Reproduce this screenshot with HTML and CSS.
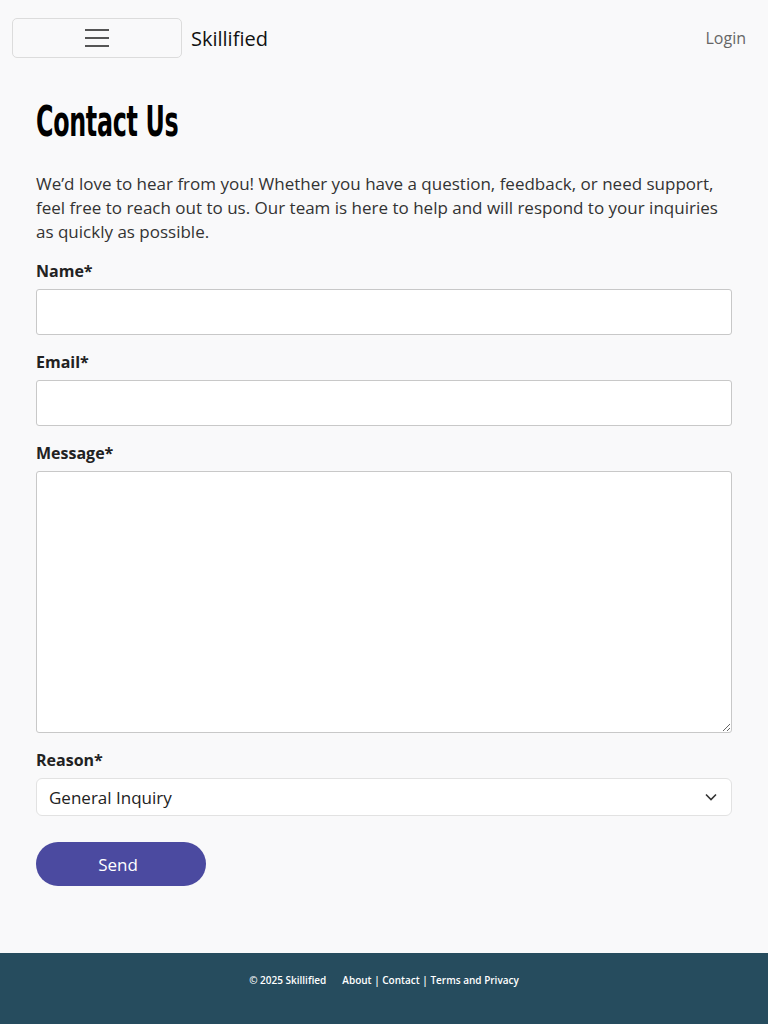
FILE: index.html
```html
<!DOCTYPE html>
<html lang="en">
<head>
<meta charset="utf-8">
<title>Contact Us - Skillified</title>
<link rel="stylesheet" href="styles.css">
</head>
<body>
<header class="navbar">
  <div class="nav-left">
    <button class="toggler" type="button" aria-label="Menu">
      <svg width="26" height="20" viewBox="0 0 26 20"><path d="M1 2h24M1 10h24M1 18h24" stroke="#555" stroke-width="2" fill="none"/></svg>
    </button>
    <a class="brand" href="#">Skillified</a>
  </div>
  <a class="login" href="#">Login</a>
</header>
<main class="content">
  <h1 class="title">Contact Us</h1>
  <p class="intro">We’d love to hear from you! Whether you have a question, feedback, or need support, feel free to reach out to us. Our team is here to help and will respond to your inquiries as quickly as possible.</p>
  <form class="form">
    <label class="label" for="name">Name*</label>
    <input class="input" id="name" type="text">
    <label class="label" for="email">Email*</label>
    <input class="input" id="email" type="email">
    <label class="label" for="msg">Message*</label>
    <textarea class="input textarea" id="msg"></textarea>
    <label class="label" for="reason">Reason*</label>
    <div class="select">
      <span>General Inquiry</span>
      <svg width="12" height="8" viewBox="0 0 12 8"><path d="M1 1.5l5 5 5-5" stroke="#333" stroke-width="1.6" fill="none"/></svg>
    </div>
    <button class="send" type="button">Send</button>
  </form>
</main>
<footer class="footer">
  <span>© 2025 Skillified</span>
  <span>About | Contact | Terms and Privacy</span>
</footer>
</body>
</html>
```

FILE: styles.css
```css
* { box-sizing: border-box; }
html, body { margin: 0; padding: 0; }
body {
  background: #f9f9fa;
  font-family: "Open Sans", "DejaVu Sans", sans-serif;
  color: #333;
  min-height: 1024px;
  display: flex;
  flex-direction: column;
}
.navbar {
  display: flex;
  align-items: center;
  justify-content: space-between;
  padding: 18px 22px 0 12px;
  height: 58px;
}
.nav-left { display: flex; align-items: center; gap: 9px; }
.toggler {
  width: 170px;
  height: 40px;
  border: 1px solid #dcdcdc;
  border-radius: 5px;
  background: #f9f9fa;
  display: flex;
  align-items: center;
  justify-content: center;
  padding: 0;
}
.brand {
  font-size: 20px;
  color: #111;
  text-decoration: none;
}
.login {
  font-size: 16px;
  color: #666;
  text-decoration: none;
}
.content {
  flex: 1;
  padding: 0 36px 67px;
}
.title {
  font-family: "DejaVu Sans Condensed", "DejaVu Sans", sans-serif;
  font-weight: bold;
  font-size: 42px;
  letter-spacing: -0.5px;
  color: #000;
  margin: 42px 0 0;
  line-height: 44px;
  transform: scaleX(0.63);
  transform-origin: left center;
  white-space: nowrap;
}
.intro {
  font-size: 17px;
  line-height: 24px;
  margin: 28px 0 0;
  color: #333;
}
.form { display: flex; flex-direction: column; }
.label {
  font-weight: bold;
  font-size: 16px;
  line-height: 24px;
  margin: 15px 0 6px;
  color: #222;
}
.input {
  width: 100%;
  height: 46px;
  border: 1px solid #c8c8c8;
  border-radius: 3px;
  background: #fff;
  font: inherit;
}
.textarea { height: 262px; resize: vertical; }
.select {
  height: 38px;
  border: 1px solid #e2e2e2;
  border-radius: 6px;
  background: #fff;
  display: flex;
  align-items: center;
  justify-content: space-between;
  padding: 0 14px 0 12px;
  font-size: 17px;
  color: #222;
}
.send {
  margin-top: 26px;
  width: 170px;
  height: 44px;
  border: none;
  border-radius: 22px;
  background: #4b4aa0;
  color: #fff;
  font: inherit;
  font-size: 17px;
  padding: 0 6px 0 0;
}
.footer {
  height: 71px;
  background: #264c5e;
  color: #fff;
  display: flex;
  justify-content: center;
  align-items: center;
  gap: 16px;
  font-size: 10px;
  font-weight: 600;
  padding-bottom: 17px;
}
```
